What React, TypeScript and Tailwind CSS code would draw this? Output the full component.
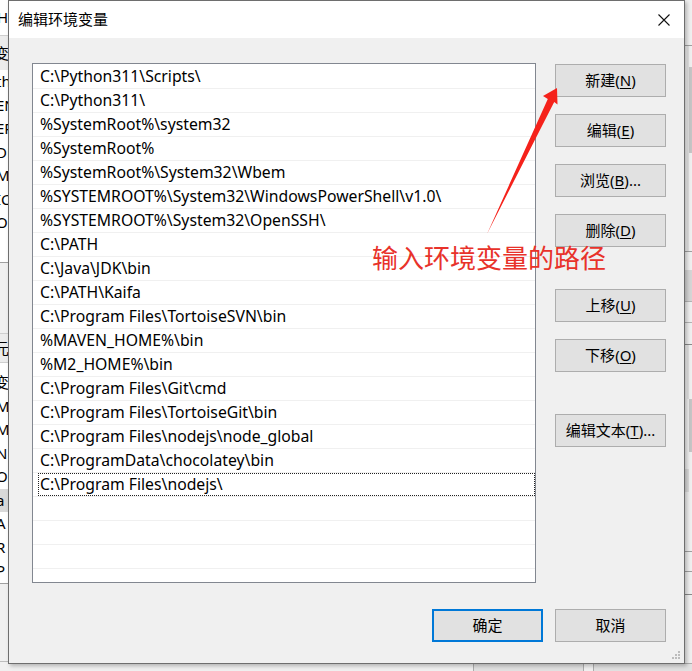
import React from "react";

const rows: string[] = [
  "C:\\Python311\\Scripts\\",
  "C:\\Python311\\",
  "%SystemRoot%\\system32",
  "%SystemRoot%",
  "%SystemRoot%\\System32\\Wbem",
  "%SYSTEMROOT%\\System32\\WindowsPowerShell\\v1.0\\",
  "%SYSTEMROOT%\\System32\\OpenSSH\\",
  "C:\\PATH",
  "C:\\Java\\JDK\\bin",
  "C:\\PATH\\Kaifa",
  "C:\\Program Files\\TortoiseSVN\\bin",
  "%MAVEN_HOME%\\bin",
  "%M2_HOME%\\bin",
  "C:\\Program Files\\Git\\cmd",
  "C:\\Program Files\\TortoiseGit\\bin",
  "C:\\Program Files\\nodejs\\node_global",
  "C:\\ProgramData\\chocolatey\\bin",
  "C:\\Program Files\\nodejs\\",
];

function Btn({
  label,
  u,
  suffix = "",
  className = "",
  primary = false,
}: {
  label: string;
  u?: string;
  suffix?: string;
  className?: string;
  primary?: boolean;
}) {
  return (
    <div
      className={
        "h-[33px] w-[111px] flex items-center justify-center bg-[#e1e1e1] text-[15px] text-black leading-none " +
        (primary ? "border-2 border-[#0078d7] " : "border border-[#adadad] ") +
        className
      }
    >
      <span>
        {label}
        {u !== undefined && (
          <>
            (<span className="underline underline-offset-[2px]">{u}</span>)
          </>
        )}
        {suffix}
      </span>
    </div>
  );
}

const leftTop = ["th", "EN", "ER", "DB", "MA", "IC", "Or", "."];
const leftBottom = ["M2", "MA", "NU", "OS", "a", "A", "R", "P"];

export default function App() {
  return (
    <div className="relative w-[692px] h-[671px] overflow-hidden bg-[#f0f0f0] font-['Noto_Sans','Noto_Sans_CJK_SC',sans-serif] text-black">
      {/* background window: left strip */}
      <div className="absolute left-0 top-0 w-[8px] h-full overflow-hidden text-[15px] leading-none">
        <div className="h-[35px] bg-white flex items-center -ml-[3px]">H</div>
        <div className="h-[1px] bg-[#cfcfcf]" />
        <div className="h-[34px] bg-[#ececec] flex items-center -ml-[6px]">变</div>
        {leftTop.map((t, i) => (
          <div key={i} className="h-[23.5px] bg-white flex items-center -ml-[4px]">
            {t}
          </div>
        ))}
        <div className="h-[4px] bg-white" />
        <div className="h-[1px] bg-[#a0a0a0]" />
        <div className="h-[70px] bg-[#f0f0f0]" />
        <div className="h-[1px] bg-[#cfcfcf]" />
        <div className="h-[28px] bg-[#ececec] flex items-center -ml-[6px]">元</div>
        <div className="h-[1px] bg-[#cfcfcf]" />
        <div className="h-[8px] bg-white" />
        <div className="bg-white flex items-center h-[23.5px] -ml-[6px]">变</div>
        {leftBottom.map((t, i) => (
          <div
            key={i}
            className={
              "h-[23.5px] flex items-center -ml-[4px] " +
              (t === "a" ? "bg-[#d9d9d9]" : "bg-white")
            }
          >
            {t}
          </div>
        ))}
        <div className="h-[1px] bg-[#a0a0a0]" />
        <div className="h-[77px] bg-[#f0f0f0]" />
        <div className="h-[1px] bg-[#bdbdbd]" />
      </div>

      {/* background window: right strip */}
      <div className="absolute right-0 top-0 w-[8px] h-full overflow-hidden">
        <div className="h-[45px]" />
        <div className="h-[1px] bg-[#a0a0a0]" />
        <div className="h-[205px] flex">
          <div className="w-[3px]" />
          <div className="w-[2px] bg-[#e2e2e2]" />
          <div className="w-[3px] flex flex-col">
            <div className="h-[21px]" />
            <div className="h-[86px] bg-[#c6c6c6]" />
          </div>
        </div>
        <div className="h-[1px] bg-[#a0a0a0]" />
        <div className="h-[18px]" />
        <div className="h-[31px] bg-[#d6d6d6]" />
        <div className="h-[1px] bg-[#b4b4b4]" />
        <div className="h-[20px]" />
        <div className="h-[1px] bg-[#b4b4b4]" />
        <div className="h-[21px]" />
        <div className="h-[1px] bg-[#8a8a8a]" />
        <div className="h-[54px] flex">
          <div className="w-[3px]" />
          <div className="w-[2px] bg-[#e2e2e2]" />
        </div>
        <div className="h-[53px] flex">
          <div className="w-[5px]" />
          <div className="w-[3px] bg-[#c6c6c6]" />
        </div>
        <div className="h-[17px]" />
        <div className="h-[23px] w-[5px] bg-[#dcdcdc]" />
        <div className="h-[59px]" />
        <div className="h-[1px] bg-[#a0a0a0]" />
        <div className="h-[19px]" />
        <div className="h-[1px] bg-[#a0a0a0]" />
        <div className="h-[22px]" />
        <div className="h-[1px] bg-[#8a8a8a]" />
      </div>

      {/* background window: buttons peeking below */}
      <div className="absolute left-[473px] top-[663px] w-[111px] h-[20px] bg-[#e1e1e1] border border-[#adadad]" />
      <div className="absolute left-[593px] top-[663px] w-[111px] h-[20px] bg-[#e1e1e1] border border-[#adadad]" />

      {/* dialog */}
      <div className="absolute left-[8px] top-0 w-[677px] h-[664px] border border-[#6e6e6e] bg-[#f0f0f0] shadow-[2px_2px_4px_rgba(0,0,0,0.25)] flex flex-col">
        <div className="h-[37px] bg-white flex items-center pl-[9px] pr-[14px]">
          <span className="text-[15px] leading-none text-black">编辑环境变量</span>
          <svg className="ml-auto" width="12" height="12" viewBox="0 0 12 12">
            <path d="M0.5 0.5 L11.5 11.5 M11.5 0.5 L0.5 11.5" stroke="#111" strokeWidth="1.1" />
          </svg>
        </div>
        <div className="flex-1 flex flex-col pl-[23px] pr-[18px] pt-[25px]">
          <div className="flex">
            <div className="w-[504px] h-[520px] border border-[#828790] bg-white overflow-hidden pt-[1px] text-[15.75px] leading-none">
              {rows.map((r, i) =>
                i === rows.length - 1 ? (
                  <div key={i} className="h-[24px] border-b border-[#f0f0f0] flex pl-[5px]">
                    <div className="flex-1 flex items-center border border-dotted border-[#222] pl-[1px] pt-[1px] whitespace-nowrap">
                      {r}
                    </div>
                  </div>
                ) : (
                  <div key={i} className="h-[24px] border-b border-[#f0f0f0] flex items-center pl-[7px] pt-[1px] whitespace-nowrap">
                    {r}
                  </div>
                )
              )}
              {[0, 1, 2, 3].map((i) => (
                <div key={"e" + i} className="h-[24px] border-b border-[#f0f0f0]" />
              ))}
            </div>
            <div className="ml-[19px] w-[111px] flex flex-col pt-[1px]">
              <Btn label="新建" u="N" />
              <Btn label="编辑" u="E" className="mt-[17px]" />
              <Btn label="浏览" u="B" suffix="..." className="mt-[17px]" />
              <Btn label="删除" u="D" className="mt-[17px]" />
              <Btn label="上移" u="U" className="mt-[42px]" />
              <Btn label="下移" u="O" className="mt-[17px]" />
              <Btn label="编辑文本" u="T" suffix="..." className="mt-[42px]" />
            </div>
          </div>
          <div className="mt-[26px] flex justify-end gap-[12px]">
            <Btn label="确定" primary />
            <Btn label="取消" />
          </div>
        </div>
        {/* resize grip */}
        <svg className="absolute right-[3px] bottom-[1px]" width="11" height="11" viewBox="0 0 11 11">
          <g fill="#bcbcbc">
            <rect x="8" y="0" width="2" height="2" />
            <rect x="5" y="3" width="2" height="2" />
            <rect x="8" y="3" width="2" height="2" />
            <rect x="2" y="6" width="2" height="2" />
            <rect x="5" y="6" width="2" height="2" />
            <rect x="8" y="6" width="2" height="2" />
          </g>
        </svg>
      </div>

      {/* annotation overlay */}
      <svg className="absolute left-0 top-0 pointer-events-none" width="692" height="671" viewBox="0 0 692 671">
        <polygon
          points="487,234 547.8,99 543,96 557,88 557.5,104.5 554.2,102.1"
          fill="#f5221b"
        />
      </svg>
      <div className="absolute left-[372px] top-[245px] text-[26px] leading-none text-[#e8322a] whitespace-nowrap pointer-events-none">
        输入环境变量的路径
      </div>
    </div>
  );
}
